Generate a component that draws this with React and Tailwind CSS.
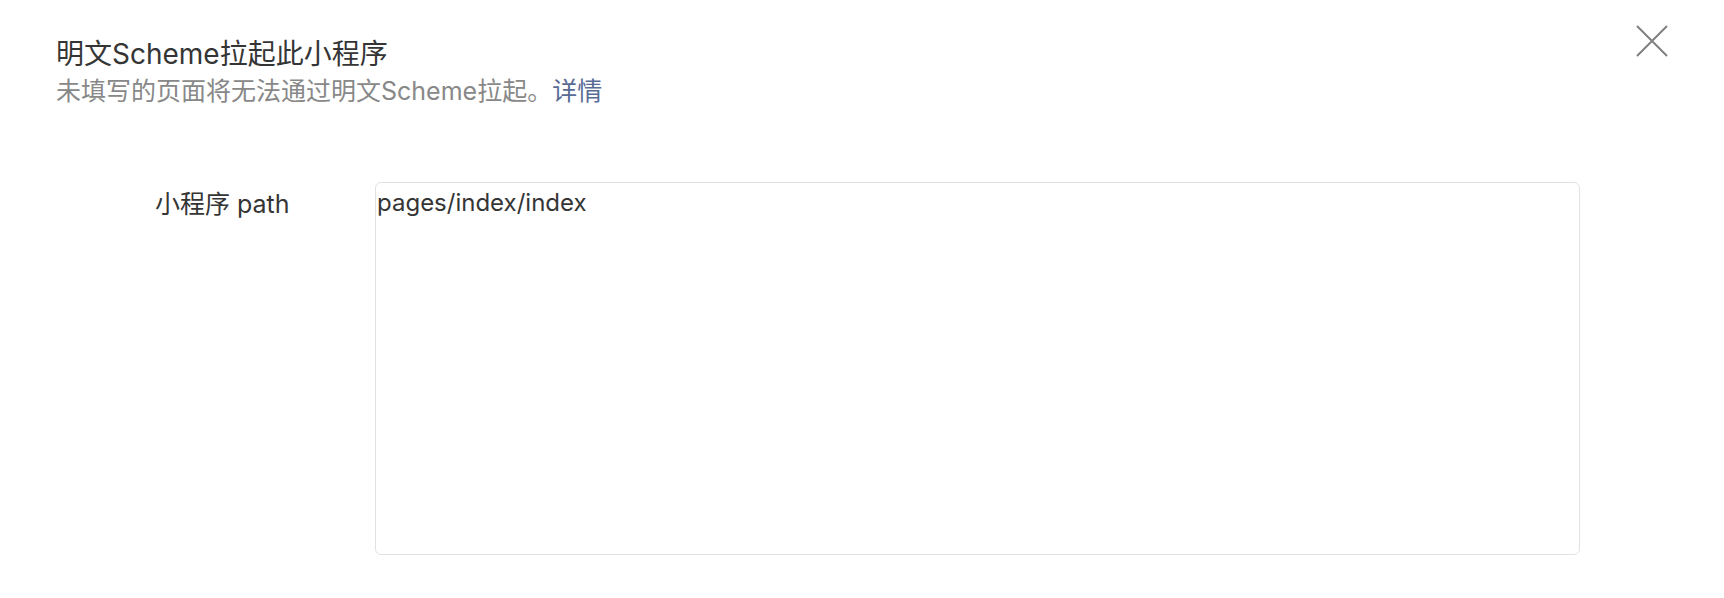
import React from 'react'

function CloseIcon() {
  return (
    <svg width="32" height="32" viewBox="0 0 32 32" fill="none">
      <path d="M1 1L31 31M31 1L1 31" stroke="#808080" strokeWidth="2" />
    </svg>
  )
}

export default function App() {
  return (
    <div className="relative w-full h-[598px] bg-white font-['Inter','Noto_Sans_CJK_SC',sans-serif]">
      <button className="absolute top-[25px] right-[56px] w-8 h-8" aria-label="close">
        <CloseIcon />
      </button>

      <div className="pl-[56px] pt-[37px]">
        <h2 className="text-[28px] leading-[34px] text-[#353535]">明文Scheme拉起此小程序</h2>
        <p className="text-[25px] leading-[40px] text-[#888888]">
          未填写的页面将无法通过明文Scheme拉起。
          <a className="text-[#576b95]" href="#">详情</a>
        </p>
      </div>

      <div className="flex pl-[155px] pt-[71px]">
        <label className="w-[220px] shrink-0 text-[25px] leading-[44px] text-[#353535]">小程序 path</label>
        <textarea
          className="w-[1205px] h-[373px] resize-none border border-[#e2e2e2] rounded-[6px] px-px py-0 text-[24px] leading-[40px] text-[#353535] outline-none"
          defaultValue="pages/index/index"
        />
      </div>
    </div>
  )
}
